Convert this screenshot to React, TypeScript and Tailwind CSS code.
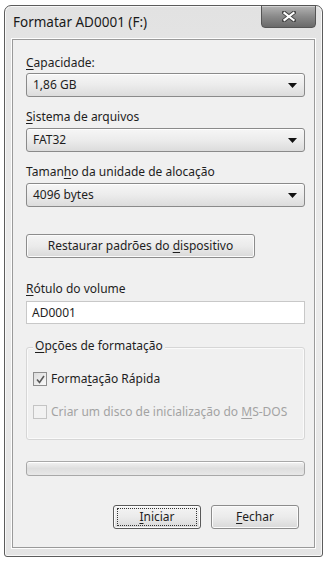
import React from "react";

const font = { fontFamily: '"Noto Sans", "Open Sans", "Liberation Sans", sans-serif' };

function Key({ children }: { children: React.ReactNode }) {
  return <span className="underline underline-offset-2">{children}</span>;
}

function Label({ children, className = "" }: { children: React.ReactNode; className?: string }) {
  return <div className={"h-[16px] text-[12px] leading-[16px] text-[#1e1e1e] " + className}>{children}</div>;
}

function Combo({ value, className = "" }: { value: string; className?: string }) {
  return (
    <div
      className={
        "flex h-[24px] items-center justify-between rounded-[3px] border border-[#8a8a8a] bg-gradient-to-b from-[#f6f6f6] via-[#ececec] to-[#dcdcdc] pl-[6px] pr-[7px] text-[12px] text-[#1e1e1e] shadow-[inset_0_1px_0_#ffffff] " +
        className
      }
    >
      <span>{value}</span>
      <svg width="9" height="5" viewBox="0 0 9 5">
        <path d="M0 0 H9 L4.5 5 Z" fill="#111" />
      </svg>
    </div>
  );
}

function Button({ children, def = false, className = "" }: { children: React.ReactNode; def?: boolean; className?: string }) {
  return (
    <div
      className={
        "flex h-[24px] items-center justify-center rounded-[3px] border bg-gradient-to-b from-[#f4f4f4] via-[#ebebeb] to-[#d9d9d9] text-[12px] text-[#1e1e1e] shadow-[inset_0_0_0_1px_#fbfbfb] " +
        (def ? "border-[#5a5a5a] " : "border-[#8c8c8c] ") +
        className
      }
    >
      {def ? (
        <div className="flex h-[18px] w-[calc(100%-6px)] items-center justify-center border border-dotted border-[#333]">
          {children}
        </div>
      ) : (
        children
      )}
    </div>
  );
}

function Check({ checked, disabled }: { checked?: boolean; disabled?: boolean }) {
  return (
    <div
      className={
        "flex h-[14px] w-[14px] items-center justify-center border " +
        (disabled ? "border-[#c4c4c4] bg-[#f2f2f2]" : "border-[#8e8e8e] bg-gradient-to-br from-[#dcdcdc] to-[#fafafa]")
      }
    >
      {checked && (
        <svg width="9" height="9" viewBox="0 0 9 9">
          <path d="M1 4.5 L3.5 7.5 L8 1" fill="none" stroke="#5a5a5a" strokeWidth="1.6" />
        </svg>
      )}
    </div>
  );
}

export default function App() {
  return (
    <div className="h-[563px] w-[329px] bg-white pl-[4px] pt-[5px]" style={font}>
      <div className="relative flex h-[552px] w-[319px] flex-col rounded-t-[7px] rounded-b-[3px] border border-[#5c5c5c] bg-gradient-to-b from-[#e2e2e2] via-[#ececec] to-[#e4e4e4] shadow-[inset_0_0_0_1px_#f8f8f8]">
        {/* title bar */}
        <div className="flex h-[33px] items-center pl-[8px] text-[13.5px] text-[#1a1a1a]">
          Formatar AD0001 (F:)
        </div>
        <div className="absolute right-[6px] top-[-1px] flex h-[23px] w-[55px] items-center justify-center rounded-b-[4px] border border-[#555] bg-gradient-to-b from-[#b4b4b4] via-[#8a8a8a] to-[#6a6a6a] shadow-[inset_0_1px_0_#d0d0d0]">
          <svg width="14" height="11" viewBox="0 0 14 11">
            <path d="M2 1.5 L12 9.5 M12 1.5 L2 9.5" stroke="#444" strokeWidth="4" strokeLinecap="square" />
            <path d="M2.5 2 L11.5 9 M11.5 2 L2.5 9" stroke="#ffffff" strokeWidth="2.2" strokeLinecap="square" />
          </svg>
        </div>

        {/* client */}
        <div className="mx-[7px] mb-[8px] flex flex-1 flex-col border border-[#9a9a9a] bg-[#f0f0f0] pl-[13px] pr-[9px] pt-[15px] shadow-[0_0_0_1px_#fdfdfd]">
          <Label>
            <Key>C</Key>apacidade:
          </Label>
          <Combo value="1,86 GB" className="mt-[2px]" />
          <Label className="mt-[12px]">
            <Key>S</Key>istema de arquivos
          </Label>
          <Combo value="FAT32" className="mt-[3px]" />
          <Label className="mt-[12px]">
            Taman<Key>h</Key>o da unidade de alocação
          </Label>
          <Combo value="4096 bytes" className="mt-[3px]" />

          <Button className="mt-[27px] w-[229px]">
            <span>
              Restaurar padrões do <Key>d</Key>ispositivo
            </span>
          </Button>

          <Label className="mt-[23px]">
            <Key>R</Key>ótulo do volume
          </Label>
          <div className="mt-[4px] flex h-[23px] items-center border border-[#c8c8c8] bg-white pl-[5px] text-[12px] text-[#1e1e1e]">
            AD0001
          </div>

          {/* group box */}
          <div className="relative mt-[23px] h-[93px] rounded-[3px] border border-[#d6d6d6] shadow-[inset_0_0_0_1px_#fafafa]">
            <div className="absolute left-[6px] top-[-10px] bg-[#f0f0f0] px-[2px] text-[12px] leading-[16px] text-[#1e1e1e]">
              <Key>O</Key>pções de formatação
            </div>
            <div className="ml-[6px] mt-[23px] flex items-center gap-[4px] text-[12px] leading-[16px] text-[#1e1e1e]">
              <Check checked />
              <span>
                Forma<Key>t</Key>ação Rápida
              </span>
            </div>
            <div className="ml-[6px] mt-[17px] flex items-center gap-[4px] text-[12px] leading-[16px] text-[#a3a3a3]">
              <Check disabled />
              <span>
                Criar um disco de inicialização do <Key>M</Key>S-DOS
              </span>
            </div>
          </div>

          {/* progress */}
          <div className="mt-[21px] h-[15px] rounded-[3px] border border-[#a8a8a8] bg-gradient-to-b from-[#f2f2f2] via-[#dedede] to-[#e8e8e8] shadow-[inset_0_1px_0_#ffffff]" />

          <div className="mt-[29px] flex justify-end gap-[10px] pr-[6px]">
            <Button def className="w-[88px]">
              <span>
                <Key>I</Key>niciar
              </span>
            </Button>
            <Button className="w-[88px]">
              <span>
                <Key>F</Key>echar
              </span>
            </Button>
          </div>
        </div>
      </div>
    </div>
  );
}
